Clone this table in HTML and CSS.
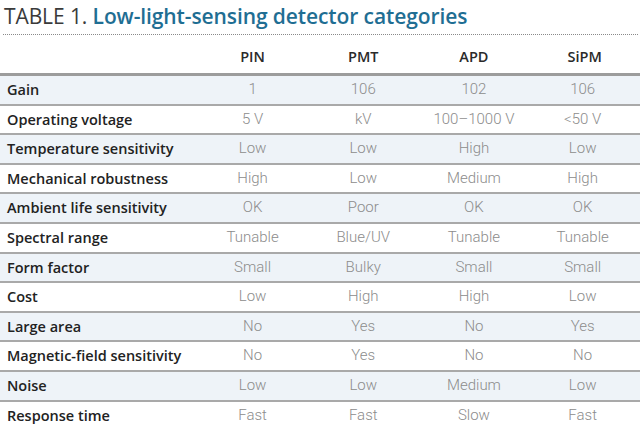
FILE: index.html
```html
<!DOCTYPE html>
<html lang="en">
<head>
<meta charset="utf-8">
<title>Table 1</title>
<link rel="stylesheet" href="styles.css">
</head>
<body>
<div class="figure">
  <h1 class="title"><span class="label">TABLE 1.</span> <span class="caption">Low-light-sensing detector categories</span></h1>
  <table class="data">
    <thead>
      <tr><th class="rowhead"></th><th>PIN</th><th>PMT</th><th>APD</th><th>SiPM</th></tr>
    </thead>
    <tbody>
      <tr class="alt"><th>Gain</th><td>1</td><td>106</td><td>102</td><td>106</td></tr>
      <tr><th>Operating voltage</th><td>5 V</td><td>kV</td><td>100–1000 V</td><td>&lt;50 V</td></tr>
      <tr class="alt"><th>Temperature sensitivity</th><td>Low</td><td>Low</td><td>High</td><td>Low</td></tr>
      <tr><th>Mechanical robustness</th><td>High</td><td>Low</td><td>Medium</td><td>High</td></tr>
      <tr class="alt"><th>Ambient life sensitivity</th><td>OK</td><td>Poor</td><td>OK</td><td>OK</td></tr>
      <tr><th>Spectral range</th><td>Tunable</td><td>Blue/UV</td><td>Tunable</td><td>Tunable</td></tr>
      <tr class="alt"><th>Form factor</th><td>Small</td><td>Bulky</td><td>Small</td><td>Small</td></tr>
      <tr><th>Cost</th><td>Low</td><td>High</td><td>High</td><td>Low</td></tr>
      <tr class="alt"><th>Large area</th><td>No</td><td>Yes</td><td>No</td><td>Yes</td></tr>
      <tr><th>Magnetic-field sensitivity</th><td>No</td><td>Yes</td><td>No</td><td>No</td></tr>
      <tr class="alt"><th>Noise</th><td>Low</td><td>Low</td><td>Medium</td><td>Low</td></tr>
      <tr class="last"><th>Response time</th><td>Fast</td><td>Fast</td><td>Slow</td><td>Fast</td></tr>
    </tbody>
  </table>
</div>
</body>
</html>
```
FILE: styles.css
```css
html, body {
  margin: 0;
  padding: 0;
  background: #ffffff;
}
body {
  width: 640px;
  height: 431px;
  overflow: hidden;
  font-family: "Open Sans", "Noto Sans", sans-serif;
}
.figure {
  width: 640px;
}
.title {
  margin: 0 2px 0 3px;
  height: 35px;
  box-sizing: border-box;
  padding: 2px 0 0 1px;
  border-bottom: 1px dotted #8a8a8a;
  font-size: 21px;
  line-height: 28px;
  font-weight: 400;
  white-space: nowrap;
  letter-spacing: -0.1px;
}
.label {
  color: #3a3a3a;
  font-weight: 400;
}
.caption {
  color: #1f6e93;
  font-weight: 600;
}
.data {
  width: 640px;
  border-collapse: separate;
  border-spacing: 0;
  table-layout: fixed;
  font-size: 14px;
}
.data th, .data td {
  padding: 0;
}
.data thead th {
  height: 41px;
  box-sizing: border-box;
  border-bottom: 3px solid #9c9c9c;
  color: #2a2a2a;
  font-weight: 600;
  text-align: center;
  font-size: 14.5px;
  line-height: 20px;
  padding-top: 12px;
  vertical-align: top;
  width: 110px;
}
.data thead th.rowhead {
  width: 196px;
}
.data tbody th,
.data tbody td {
  line-height: 27.6px;
  border-bottom: 2px solid #a9a9a9;
  white-space: nowrap;
}
.data tbody tr.last th,
.data tbody tr.last td {
  border-bottom: none;
}
.data tbody th {
  text-align: left;
  padding-left: 7px;
  color: #222222;
  font-weight: 600;
  font-size: 14.5px;
  letter-spacing: 0;
}
.data tbody td {
  text-align: center;
  color: #8c8c8c;
  font-family: "Roboto", "Open Sans", sans-serif;
  font-weight: 300;
  font-size: 15px;
}
.data tbody td:last-child {
  padding-right: 4px;
}
.data tbody tr.alt th,
.data tbody tr.alt td {
  background: #eef3f8;
}
```
